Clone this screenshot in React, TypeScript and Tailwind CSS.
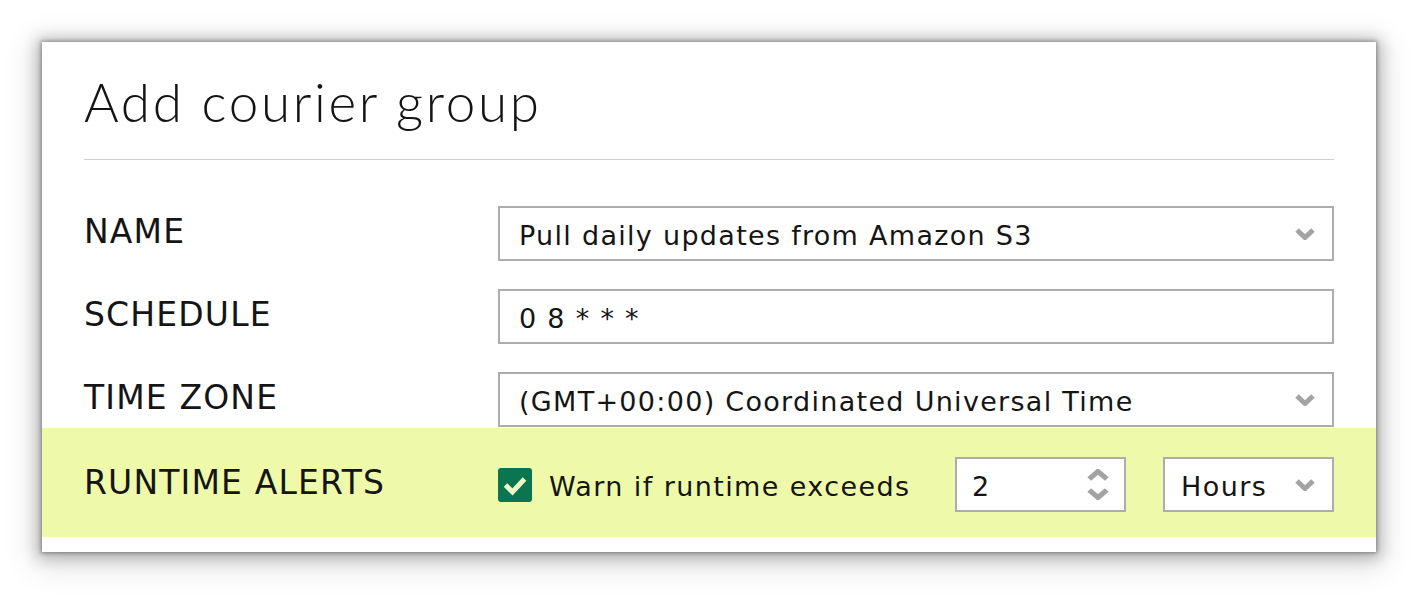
import type { ReactNode } from "react";

const body = "font-['DejaVu_Sans','Open_Sans',sans-serif]";

function Chevron({ up = false, w = 20 }: { up?: boolean; w?: number }) {
  return (
    <svg width={w} height="12" viewBox="0 0 20 12" preserveAspectRatio="none" className="shrink-0">
      <polyline
        points={up ? "2,10 10,2.5 18,10" : "2,2 10,9.5 18,2"}
        fill="none"
        stroke="#a3a3a3"
        strokeWidth="5"
      />
    </svg>
  );
}

function Row({ label, children }: { label: string; children: ReactNode }) {
  return (
    <div className="flex items-center h-[55px]">
      <div className="w-[414px] pb-[4px] text-[33px] tracking-[0.035em] text-[#151515] leading-none">
        {label}
      </div>
      <div className="flex-1 h-full">{children}</div>
    </div>
  );
}

function Field({ value, select }: { value: string; select?: boolean }) {
  return (
    <div className="h-full border-2 border-[#adadad] bg-white flex items-center pl-[19px] pr-[17px]">
      <span className="flex-1 pt-[3px] text-[27px] tracking-[0.048em] text-[#151515] leading-none">
        {value}
      </span>
      {select && <Chevron />}
    </div>
  );
}

export default function App() {
  return (
    <div className={`min-h-[595px] bg-white pt-[42px] pl-[42px] ${body}`}>
      <div className="w-[1334px] bg-white pb-[15px] shadow-[0_0_4px_1px_rgba(0,0,0,0.35),0_2px_14px_5px_rgba(0,0,0,0.22),0_6px_30px_8px_rgba(0,0,0,0.12)]">
        <div className="px-[42px] pt-[33px]">
          <h1 className="font-['Lato',sans-serif] font-light text-[53px] tracking-[0.05em] leading-none text-[#141414]">
            Add courier group
          </h1>
          <div className="mt-[31px] h-px bg-[#cfcfcf]" />
        </div>

        {/* form rows */}
        <div className="px-[42px] mt-[46px] flex flex-col gap-[28px]">
          <Row label="NAME">
            <Field value="Pull daily updates from Amazon S3" select />
          </Row>
          <Row label="SCHEDULE">
            <Field value="0 8 * * *" />
          </Row>
          <Row label="TIME ZONE">
            <Field value="(GMT+00:00) Coordinated Universal Time" select />
          </Row>
        </div>

        {/* runtime alerts */}
        <div className="mt-[1px] h-[109px] pt-[4px] bg-[#eefaa9] px-[42px] flex items-center">
          <div className="w-[414px] pb-[4px] text-[33px] tracking-[0.035em] text-[#151515] leading-none">
            RUNTIME ALERTS
          </div>
          <div className="flex-1 flex items-center">
            <div className="w-[34px] h-[34px] rounded-[3px] bg-[#0b7550] flex items-center justify-center">
              <svg width="34" height="34" viewBox="0 0 34 34">
                <polyline
                  points="7.5,17 14.5,24 26.5,11"
                  fill="none"
                  stroke="#eef7c6"
                  strokeWidth="5"
                />
              </svg>
            </div>
            <span className="ml-[17px] pt-[3px] text-[27px] tracking-[0.052em] text-[#151515] leading-none">
              Warn if runtime exceeds
            </span>
          </div>
          <div className="w-[171px] h-[55px] border-2 border-[#adadad] bg-white flex items-center pl-[15px] pr-[15px]">
            <span className="flex-1 pt-[3px] text-[27px] text-[#151515] leading-none">2</span>
            <div className="flex flex-col gap-[7px]">
              <Chevron up w={22} />
              <Chevron w={22} />
            </div>
          </div>
          <div className="ml-[37px] w-[171px] h-[55px] border-2 border-[#adadad] bg-white flex items-center pl-[16px] pr-[17px]">
            <span className="flex-1 pt-[3px] text-[27px] tracking-[0.052em] text-[#151515] leading-none">Hours</span>
            <Chevron />
          </div>
        </div>
      </div>
    </div>
  );
}
